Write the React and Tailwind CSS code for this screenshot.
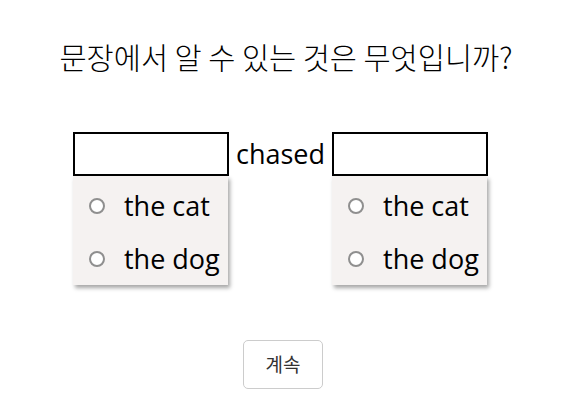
import React, { useState } from "react";

const latin = "font-['Open_Sans','Noto_Sans_CJK_KR',sans-serif]";

const Blank = ({ options, picked, onPick }) => (
  <div className="relative">
    <div className="w-[156px] h-[44px] border-2 border-black bg-white" />
    {/* open option list */}
    <div className="absolute left-0 top-[44px] w-[155px] pt-[3px] bg-[#f5f2f1] shadow-[2px_3px_4px_rgba(0,0,0,0.35)] z-10">
      {options.map((opt) => (
        <label key={opt} className="flex items-center h-[53px] pl-[16px] cursor-pointer">
          <span
            className={`w-[16px] h-[16px] rounded-full border-2 border-[#8f8f8f] bg-white ${
              picked === opt ? "ring-2 ring-[#858585]" : ""
            }`}
            onClick={() => onPick(opt)}
          />
          <span className="ml-[19px] text-[27px] text-black leading-none">{opt}</span>
        </label>
      ))}
    </div>
  </div>
);

export default function App() {
  const [first, setFirst] = useState(null);
  const [second, setSecond] = useState(null);
  const options = ["the cat", "the dog"];

  return (
    <div className={`w-[576px] h-[415px] bg-white ${latin} flex flex-col items-center`}>
      <h1 className="mt-[39px] pr-[4px] text-[29.5px] leading-[34px] text-black font-['Noto_Sans_CJK_KR',sans-serif] font-light">
        문장에서 알 수 있는 것은 무엇입니까?
      </h1>

      <div className="mt-[59px] flex items-center gap-[7px] pr-[15px]">
        <Blank options={options} picked={first} onPick={setFirst} />
        <span className="text-[27px] text-black leading-none pb-[2px]">chased</span>
        <Blank options={options} picked={second} onPick={setSecond} />
      </div>

      <button className="mt-[164px] mr-[10px] w-[80px] h-[49px] border border-[#cccccc] rounded-[5px] bg-white text-[19px] text-[#333] font-['Noto_Sans_CJK_KR',sans-serif] font-normal">
        계속
      </button>
    </div>
  );
}
